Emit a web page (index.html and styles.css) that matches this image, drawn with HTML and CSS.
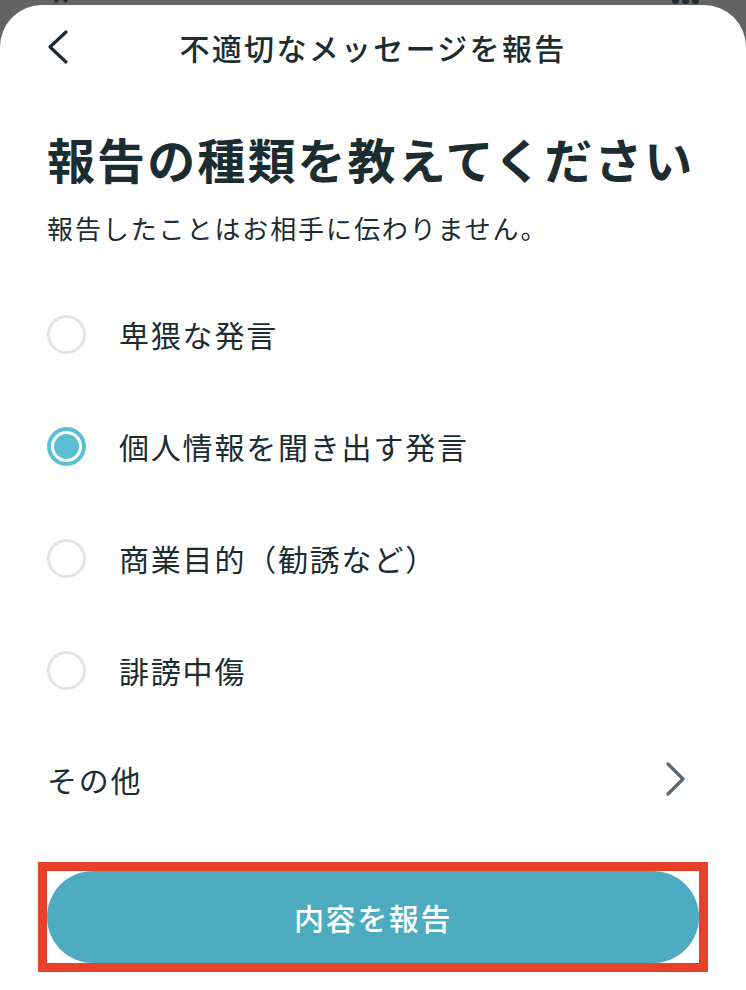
FILE: index.html
```html
<!DOCTYPE html>
<html lang="ja">
<head>
<meta charset="utf-8">
<title>不適切なメッセージを報告</title>
<link rel="stylesheet" href="styles.css">
</head>
<body>
<div class="backdrop">
  <span class="peek-caret"></span>
  <span class="peek-dots"><i></i><i></i><i></i></span>
</div>
<div class="sheet">
  <header class="topbar">
    <button class="back" aria-label="戻る">
      <svg width="24" height="36" viewBox="0 0 24 36"><polyline points="19,3 3,18 19,33" fill="none" stroke="#1b2d31" stroke-width="3.2" stroke-linecap="round" stroke-linejoin="round"/></svg>
    </button>
    <h1 class="title">不適切なメッセージを報告</h1>
    <span></span>
  </header>

  <main class="content">
    <h2 class="heading">報告の種類を教えてください</h2>
    <p class="sub">報告したことはお相手に伝わりません。</p>

    <ul class="options">
      <li class="option"><span class="radio"></span><span class="label">卑猥な発言</span></li>
      <li class="option"><span class="radio checked"></span><span class="label">個人情報を聞き出す発言</span></li>
      <li class="option"><span class="radio"></span><span class="label">商業目的（勧誘など）</span></li>
      <li class="option"><span class="radio"></span><span class="label">誹謗中傷</span></li>
    </ul>

    <div class="other">
      <span class="label">その他</span>
      <svg width="22" height="36" viewBox="0 0 22 36"><polyline points="3,3 18,18 3,33" fill="none" stroke="#5b6a6d" stroke-width="3.2" stroke-linecap="round" stroke-linejoin="round"/></svg>
    </div>
  </main>

  <div class="highlight">
    <button class="submit">内容を報告</button>
  </div>
</div>
</body>
</html>
```

FILE: styles.css
```css
* { box-sizing: border-box; }
html, body { margin: 0; padding: 0; }
body {
  background: #636363;
  font-family: "Noto Sans CJK JP", "Noto Sans", sans-serif;
  color: #1b2d31;
  width: 746px;
  height: 990px;
  overflow: hidden;
  position: relative;
}
.backdrop { position: absolute; top: 0; left: 0; width: 746px; height: 6px; }
.peek-caret {
  position: absolute; left: 56px; top: -4px;
  width: 10px; height: 10px;
  border-left: 3px solid #1b2d31; border-top: 3px solid #1b2d31;
  transform: rotate(45deg);
}
.peek-dots { position: absolute; left: 672px; top: -3px; display: flex; gap: 3px; }
.peek-dots i { width: 7px; height: 7px; border-radius: 50%; background: #1b2d31; display: block; }

.sheet {
  position: relative;
  margin-top: 5px;
  height: 985px;
  background: #fff;
  border-radius: 42px 42px 0 0;
}
.topbar {
  height: 84px;
  display: grid;
  grid-template-columns: 1fr auto 1fr;
  align-items: center;
}
.back {
  justify-self: start;
  margin-left: 47px;
  padding: 0; border: 0; background: none;
  display: flex;
}
.title {
  margin: 0;
  font-size: 30px;
  font-weight: 500;
  letter-spacing: 2.3px;
  line-height: 40px;
}
.content { padding: 0 48px 0 47px; }
.heading {
  margin: 39px 0 0;
  font-size: 48px;
  line-height: 60px;
  font-weight: 700;
  letter-spacing: 2.1px;
  white-space: nowrap;
}
.sub {
  margin: 22px 0 0;
  font-size: 26px;
  line-height: 36px;
  letter-spacing: 1.9px;
  font-weight: 400;
}
.options { list-style: none; margin: 32px 0 0; padding: 0; }
.option {
  height: 112px;
  display: flex;
  align-items: center;
  gap: 33px;
}
.radio {
  width: 39px; height: 39px;
  border-radius: 50%;
  border: 3px solid #dfe5e7;
  flex: none;
  display: flex; align-items: center; justify-content: center;
}
.radio.checked { border: 4px solid #5bbfd3; }
.radio.checked::after {
  content: "";
  width: 25px; height: 25px;
  border-radius: 50%;
  background: #5bbfd3;
}
.label {
  font-size: 30px;
  line-height: 40px;
  letter-spacing: 1.8px;
}
.other {
  height: 106px;
  display: flex;
  align-items: center;
  justify-content: space-between;
  padding-right: 11px;
}
.highlight {
  margin: 30px 0 0 38px;
  width: 670px;
  height: 110px;
  border: 9px solid #e8412a;
  display: flex;
}
.submit {
  flex: 1;
  border: 0;
  border-radius: 46px;
  background: #4dabbf;
  color: #fff;
  font-family: "Noto Sans CJK JP", "Noto Sans", sans-serif;
  font-size: 30px;
  font-weight: 500;
  letter-spacing: 1.6px;
  padding: 0;
}
```
